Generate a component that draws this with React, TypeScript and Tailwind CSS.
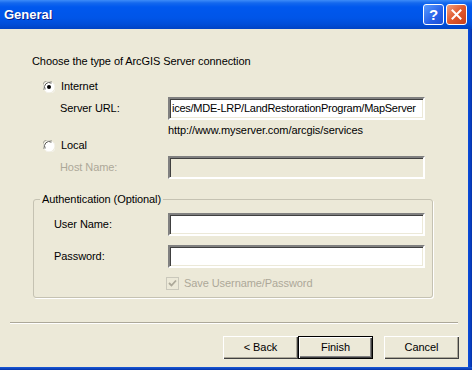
import React from "react";

function Radio({ checked }: { checked?: boolean }) {
  return (
    <svg width="12" height="12" viewBox="0 0 12 12" className="shrink-0">
      <circle cx="6" cy="6" r="5.5" fill="#fff" />
      <path d="M1.2 9 A5.5 5.5 0 0 1 9 1.2" fill="none" stroke="#9a9a90" strokeWidth="1" />
      <path d="M2.2 8.4 A4.5 4.5 0 0 1 8.4 2.2" fill="none" stroke="#55554e" strokeWidth="1" />
      <path d="M10.8 3 A5.5 5.5 0 0 1 3 10.8" fill="none" stroke="#f4f3ee" strokeWidth="1" />
      {checked && <circle cx="6" cy="6" r="2" fill="#000" />}
    </svg>
  );
}

function Input({ value, disabled }: { value?: string; disabled?: boolean }) {
  return (
    <div
      className={`w-[257px] h-[23px] border-2 border-t-[#808080] border-l-[#808080] border-b-white border-r-white shadow-[inset_1px_1px_0_#404040,inset_-1px_-1px_0_#ECE9D8] flex items-center pl-[2px] overflow-hidden whitespace-nowrap tracking-[-0.25px] ${
        disabled ? "bg-[#ECE9D8]" : "bg-white"
      }`}
    >
      {value}
    </div>
  );
}

function Button({ label, def }: { label: string; def?: boolean }) {
  return (
    <div
      className={`w-[75px] h-[23px] flex items-center justify-center bg-[#ECE9D8] ${
        def
          ? "border border-black shadow-[inset_1px_1px_0_#fff,inset_-1px_-1px_0_#404040,inset_-2px_-2px_0_#808080]"
          : "shadow-[inset_1px_1px_0_#fff,inset_-1px_-1px_0_#404040,inset_-2px_-2px_0_#ACA899]"
      }`}
    >
      {label}
    </div>
  );
}

export default function App() {
  return (
    <div className="w-[472px] h-[370px] overflow-hidden flex flex-col bg-[#ECE9D8] text-[11px] leading-[13px] tracking-[-0.08px] text-black font-['Tahoma','Liberation_Sans',sans-serif]">
      {/* Title bar */}
      <div className="h-[29px] shrink-0 flex items-center pl-[4px] pr-[5px] bg-[linear-gradient(to_bottom,#3d8cf8_0px,#1468ee_3px,#0058ee_7px,#0055e8_18px,#004ed9_24px,#0043c4_29px)]">
        <span className="text-white font-bold text-[13px] tracking-normal font-['Liberation_Sans',sans-serif] [text-shadow:1px_1px_0_#0a1e8c]">
          General
        </span>
        <div className="ml-auto flex gap-[2px]">
          <div className="w-[21px] h-[21px] rounded-[3px] border border-white bg-[linear-gradient(to_bottom_right,#5a9bff,#2660e8_60%,#1b4fd6)] flex items-center justify-center text-white font-bold text-[15px] font-['Liberation_Sans',sans-serif]">
            ?
          </div>
          <div className="w-[21px] h-[21px] rounded-[3px] border border-white bg-[linear-gradient(to_bottom_right,#f2a07e,#e0582d_50%,#c8401c)] flex items-center justify-center">
            <svg width="11" height="11" viewBox="0 0 11 11">
              <path d="M1.5 1.5 L9.5 9.5 M9.5 1.5 L1.5 9.5" stroke="#fff" strokeWidth="2" strokeLinecap="square" />
            </svg>
          </div>
        </div>
      </div>

      <div className="flex flex-1">
        {/* Body */}
        <div className="flex-1 flex flex-col">
          <div className="mt-[26px] pl-[32px]">Choose the type of ArcGIS Server connection</div>

          <div className="mt-[12px] pl-[43px] flex items-center gap-[6px] h-[13px]">
            <Radio checked />
            <span>Internet</span>
          </div>

          <div className="mt-[4px] pl-[60px] flex items-center">
            <span className="w-[108px]">Server URL:</span>
            <Input value="ices/MDE-LRP/LandRestorationProgram/MapServer" />
          </div>

          <div className="mt-[4px] pl-[168px]">http://www.myserver.com/arcgis/services</div>

          <div className="mt-[2px] pl-[43px] flex items-center gap-[6px] h-[13px]">
            <Radio />
            <span>Local</span>
          </div>

          <div className="mt-[4px] pl-[60px] flex items-center">
            <span className="w-[108px] text-[#ACA899]">Host Name:</span>
            <Input disabled />
          </div>

          {/* Group box */}
          <fieldset className="mt-[14px] ml-[33px] w-[400px] h-[105px] border border-[#C5C2B2] rounded-[3px] shadow-[1px_1px_0_#fff] px-0 pt-0 pb-0 min-w-0">
            <legend className="ml-[6px] px-[2px]">Authentication (Optional)</legend>
            <div className="pl-[20px] mt-[7px] flex items-center">
              <span className="w-[114px]">User Name:</span>
              <Input />
            </div>
            <div className="pl-[20px] mt-[9px] flex items-center">
              <span className="w-[114px]">Password:</span>
              <Input />
            </div>
            <div className="pl-[132px] mt-[9px] flex items-center gap-[5px]">
              <div className="w-[13px] h-[13px] border border-[#CAC8BB] bg-[#ECE9D8] flex items-center justify-center">
                <svg width="9" height="9" viewBox="0 0 9 9">
                  <path d="M1 4 L3.5 6.5 L8 1.5" fill="none" stroke="#ACA899" strokeWidth="1.8" />
                </svg>
              </div>
              <span className="text-[#ACA899]">Save Username/Password</span>
            </div>
          </fieldset>

          {/* Separator */}
          <div className="mt-[24px] ml-[10px] w-[448px] h-[2px] border-t border-t-[#ACA899] border-b border-b-white" />

          {/* Buttons */}
          <div className="mt-[12px] flex justify-end pr-[9px]">
            <Button label="< Back" />
            <Button label="Finish" def />
            <div className="w-[11px]" />
            <Button label="Cancel" />
          </div>
        </div>
        {/* Right border */}
        <div className="w-[4px] bg-[linear-gradient(to_right,#0a4ddb,#0842c8_50%,#0633a8)]" />
      </div>
      <div className="h-[3px] shrink-0 bg-[linear-gradient(to_bottom,#1a5ad8,#0633a8)]" />
    </div>
  );
}
